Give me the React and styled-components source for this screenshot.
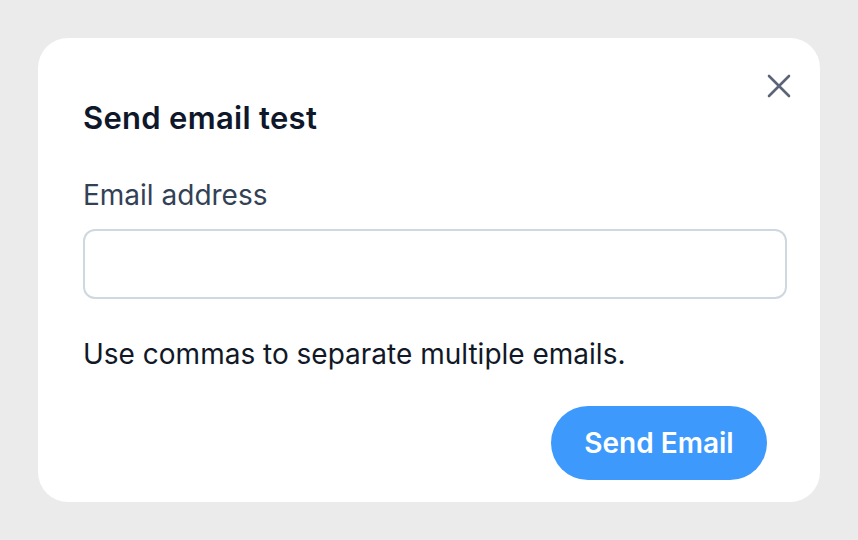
import React, { useState } from "react";
import styled, { createGlobalStyle } from "styled-components";

const GlobalStyle = createGlobalStyle`
  html, body {
    margin: 0;
    padding: 0;
    background: #ebebeb;
    font-family: Inter, "Noto Sans", sans-serif;
  }
`;

export default function App() {
  const [email, setEmail] = useState("");

  return (
    <>
      <GlobalStyle />
      <Page>
        <Card>
          <CloseButton aria-label="Close">
            <svg width="28" height="28" viewBox="0 0 28 28" fill="none">
              <path
                d="M4 4L24 24M24 4L4 24"
                stroke="#5b6478"
                strokeWidth="2.6"
                strokeLinecap="round"
              />
            </svg>
          </CloseButton>
          <Title>Send email test</Title>
          <Label htmlFor="email">Email address</Label>
          <Input
            id="email"
            type="text"
            value={email}
            onChange={(e) => setEmail(e.target.value)}
          />
          <Helper>Use commas to separate multiple emails.</Helper>
          <Actions>
            <SendButton type="button">Send Email</SendButton>
          </Actions>
        </Card>
      </Page>
    </>
  );
}

const Page = styled.div`
  width: 858px;
  height: 540px;
  box-sizing: border-box;
  padding: 38px;
`;

const Card = styled.div`
  position: relative;
  box-sizing: border-box;
  width: 782px;
  height: 464px;
  background: #ffffff;
  border-radius: 30px;
  padding: 62px 33px 0 45px;
  display: flex;
  flex-direction: column;
`;

const CloseButton = styled.button`
  position: absolute;
  top: 32px;
  right: 25px;
  width: 32px;
  height: 32px;
  padding: 0;
  border: none;
  background: none;
  display: flex;
  align-items: center;
  justify-content: center;
  cursor: pointer;
`;

const Title = styled.h2`
  margin: 0;
  font-size: 31px;
  line-height: 36px;
  letter-spacing: 0.3px;
  font-weight: 600;
  color: #0f172a;
`;

const Label = styled.label`
  margin-top: 43px;
  font-size: 28px;
  line-height: 32px;
  color: #334155;
`;

const Input = styled.input`
  margin-top: 18px;
  box-sizing: border-box;
  width: 704px;
  height: 70px;
  border: 2px solid #cfd8e0;
  border-radius: 12px;
  padding: 0 18px;
  font-family: inherit;
  font-size: 24px;
  outline: none;
`;

const Helper = styled.p`
  margin: 39px 0 0;
  font-size: 28px;
  line-height: 32px;
  color: #111827;
`;

const Actions = styled.div`
  display: flex;
  justify-content: flex-end;
  margin-top: 36px;
  padding-right: 20px;
`;

const SendButton = styled.button`
  width: 216px;
  height: 74px;
  border: none;
  border-radius: 37px;
  background: #3d99fc;
  color: #ffffff;
  font-family: inherit;
  font-size: 28px;
  font-weight: 600;
  cursor: pointer;
`;
